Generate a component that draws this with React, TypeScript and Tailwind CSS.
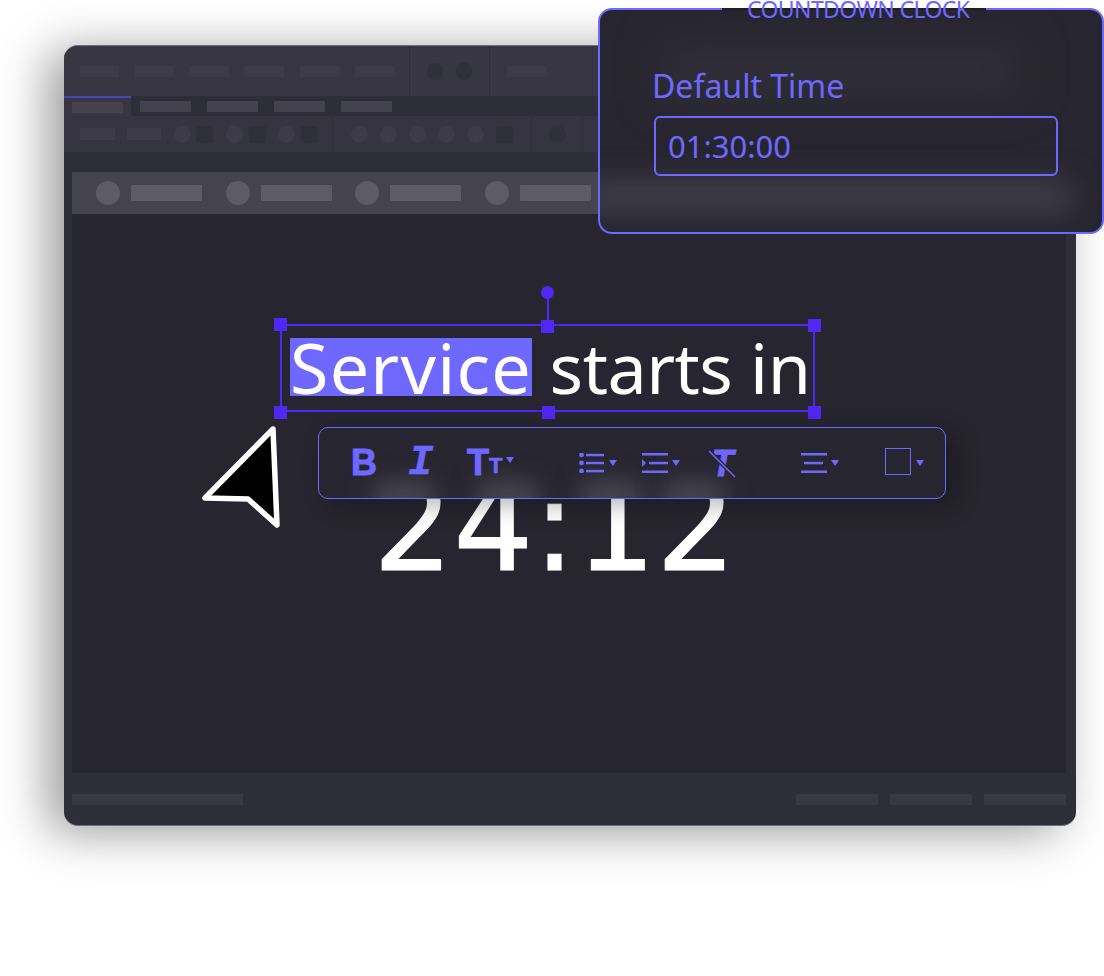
import React from 'react';

const Bar = ({ className }: { className: string }) => <div className={`shrink-0 ${className}`}></div>;

const Caret = ({ className = '' }: { className?: string }) => (
  <svg width="8" height="6" viewBox="0 0 8 6" className={`shrink-0 ${className}`}>
    <polygon points="0,0 8,0 4,6" fill="#6e68ff" />
  </svg>
);

const topBar = 'w-[39px] h-[11px] bg-[#3c3b47]';
const tabBar = 'w-[51px] h-[11px] bg-[#43424e] rounded-[1px]';
const softDot = 'w-[17px] h-[17px] rounded-full bg-[#3c3b47]';
const darkSquare = 'w-[17px] h-[17px] rounded-[2px] bg-[#30303a]';
const stripDot = 'w-[24px] h-[24px] rounded-full bg-[#5c5b66]';
const stripBar = 'w-[71px] h-[16px] rounded-[1px] bg-[#5c5b66]';
const footBar = 'h-[11px] bg-[#393844]';
const glow = 'absolute bottom-[-12px] w-[66px] h-[28px] rounded-full bg-[#4a4954] blur-[12px]';

const StripItem = () => (
  <div className="flex items-center gap-[11px] w-[129.6px] shrink-0">
    <Bar className={stripDot} />
    <Bar className={stripBar} />
  </div>
);

const Toolbar = () => (
  <div className="absolute left-[246px] top-[213px] w-[628px] h-[72px] flex items-center rounded-[10px] border border-[#6e68ff] bg-[#272630] shadow-[10px_6px_24px_rgba(0,0,0,0.3)] text-[#6e68ff]">
    {/* smeared tops of the clock digits behind the frosted bar */}
    <div className="absolute inset-0 overflow-hidden rounded-[9px]">
      <div className={`${glow} left-[52px]`}></div>
      <div className={`${glow} left-[156px]`}></div>
      <div className={`${glow} left-[259px]`}></div>
      <div className={`${glow} left-[342px]`}></div>
    </div>
    <span className="relative ml-[32px] w-[25px] font-['Liberation_Sans'] font-bold text-[36px] leading-none [-webkit-text-stroke:1px_#6e68ff]">B</span>
    <span className="relative ml-[32px] w-[26px] font-['Liberation_Mono'] font-bold italic text-[42px] leading-none [-webkit-text-stroke:0.5px_#6e68ff]">I</span>
    <span className="relative ml-[33px] font-['Liberation_Sans'] font-bold text-[36px] leading-none [-webkit-text-stroke:1px_#6e68ff]">T</span>
    <span className="relative mt-[6px] font-['Liberation_Sans'] font-bold text-[22px] leading-none [-webkit-text-stroke:0.6px_#6e68ff]">T</span>
    <Caret className="relative ml-[4px] mb-[6px]" />
    <svg width="26" height="20" viewBox="0 0 26 20" className="relative ml-[65px]">
      <g fill="#6e68ff">
        <circle cx="2.5" cy="2" r="2.4" /><circle cx="2.5" cy="10" r="2.4" /><circle cx="2.5" cy="18" r="2.4" />
        <rect x="7" y="0.8" width="18" height="2.5" /><rect x="7" y="8.8" width="18" height="2.5" /><rect x="7" y="16.8" width="18" height="2.5" />
      </g>
    </svg>
    <Caret className="relative ml-[4px]" />
    <svg width="26" height="20" viewBox="0 0 26 20" className="relative ml-[25px]">
      <g fill="#6e68ff">
        <rect x="0" y="0" width="26" height="2.5" /><rect x="7" y="8.8" width="19" height="2.5" /><rect x="0" y="17.5" width="26" height="2.5" />
        <polygon points="0,6 4,10 0,14" />
      </g>
    </svg>
    <Caret className="relative ml-[4px]" />
    <div className="relative ml-[28px] w-[28px] h-[27px] flex justify-center">
      <span className="font-['Liberation_Sans'] font-bold italic text-[36px] leading-[27px] [-webkit-text-stroke:1px_#6e68ff]">T</span>
      <svg width="28" height="27" viewBox="0 0 28 27" className="absolute left-0 top-0">
        <line x1="1" y1="1" x2="27" y2="27" stroke="#272630" strokeWidth="4" />
        <line x1="1" y1="1" x2="27" y2="27" stroke="#6e68ff" strokeWidth="1.5" />
      </svg>
    </div>
    <svg width="26" height="20" viewBox="0 0 26 20" className="relative ml-[65px]">
      <g fill="#6e68ff">
        <rect x="0" y="0" width="26" height="2.5" /><rect x="3" y="8.8" width="19" height="2.5" /><rect x="0" y="17.5" width="26" height="2.5" />
      </g>
    </svg>
    <Caret className="relative ml-[4px]" />
    <div className="relative ml-[46px] mb-[3px] w-[26px] h-[27px] border-[1.5px] border-[#6e68ff]"></div>
    <Caret className="relative ml-[5px]" />
  </div>
);

const Handle = ({ className }: { className: string }) => (
  <div className={`absolute w-[13px] h-[13px] bg-[#5028f5] ${className}`}></div>
);

export default function App() {
  return (
    <div className="relative w-full h-[976px] bg-white overflow-hidden pt-[45px] pl-[64px] font-['Noto_Sans',sans-serif]">
      <div className="w-[1012px] h-[781px] rounded-[14px] bg-[#2e2e38] border-y border-[#71707a] overflow-hidden flex flex-col shadow-[-16px_6px_48px_rgba(0,0,0,0.4)]">
        <div className="h-[50px] flex bg-[#373642] shrink-0">
          <div className="w-[346px] flex items-center gap-[16px] pl-[16px] border-r border-[#302f3a]">
            {[0, 1, 2, 3, 4, 5].map((i) => <Bar key={i} className={topBar} />)}
          </div>
          <div className="w-[80px] flex items-center gap-[13px] pl-[17px] border-r border-[#302f3a]">
            <Bar className="w-[16px] h-[17px] rounded-full bg-[#30303a]" />
            <Bar className="w-[16px] h-[17px] rounded-full bg-[#30303a]" />
          </div>
          <div className="w-[103px] flex items-center pl-[17px] border-r border-[#302f3a]">
            <Bar className={topBar} />
          </div>
        </div>

        <div className="h-[20px] flex items-center shrink-0 relative">
          <div className="w-[67px] h-full pl-[8px] flex items-center bg-[#373642] border-t-2 border-[#4d43b8]">
            <Bar className={tabBar} />
          </div>
          <div className="flex gap-[16px] ml-[9px]">
            {[0, 1, 2, 3].map((i) => <Bar key={i} className={tabBar} />)}
          </div>
        </div>

        <div className="h-[36px] flex bg-[#353440] shrink-0">
          <div className="w-[269px] flex items-center pl-[16px] border-r border-[#302f3a]">
            <Bar className="w-[35px] h-[12px] bg-[#3c3b47]" />
            <Bar className="ml-[12px] w-[34px] h-[12px] bg-[#3c3b47]" />
            <Bar className={`ml-[13px] ${softDot}`} />
            <Bar className={`ml-[5px] ${darkSquare}`} />
            <Bar className={`ml-[13px] ${softDot}`} />
            <Bar className={`ml-[6px] ${darkSquare}`} />
            <Bar className={`ml-[12px] ${softDot}`} />
            <Bar className={`ml-[6px] ${darkSquare}`} />
          </div>
          <div className="w-[199px] flex items-center gap-[12px] pl-[18px] border-r border-[#302f3a]">
            {[0, 1, 2, 3, 4].map((i) => <Bar key={i} className={softDot} />)}
            <Bar className={darkSquare} />
          </div>
          <div className="w-[51px] flex items-center pl-[17px] border-r border-[#302f3a]">
            <Bar className="w-[17px] h-[17px] rounded-full bg-[#30303a]" />
          </div>
        </div>

        <div className="flex-1 flex flex-col pl-[8px] pt-[20px] pr-[10px]">
          <div className="h-[42px] flex items-center pl-[24px] bg-[#44434e] shrink-0">
            {[0, 1, 2, 3, 4, 5, 6, 7].map((i) => <StripItem key={i} />)}
          </div>
          <div className="relative flex-1 bg-[#272630]">
            <div className="absolute left-[208px] top-[110px] w-[535px] h-[88px] border-2 border-[#5028f5]"></div>
            <div className="absolute left-[474.5px] top-[78px] w-[2px] h-[32px] bg-[#5028f5]"></div>
            <div className="absolute left-[469px] top-[72px] w-[13px] h-[13px] rounded-full bg-[#5028f5]"></div>
            <Handle className="left-[202px] top-[104px]" />
            <Handle className="left-[469px] top-[106px]" />
            <Handle className="left-[736px] top-[105px]" />
            <Handle className="left-[202px] top-[192px]" />
            <Handle className="left-[470px] top-[192px]" />
            <Handle className="left-[736px] top-[192px]" />

            <div className="absolute left-[218px] top-[109px] h-[88px] flex items-center text-white text-[70px] leading-none whitespace-nowrap">
              <span className="bg-[#6e68ff] h-[58px] leading-[58px] tracking-[1.2px]">Service</span>
              <span className="tracking-[-0.5px]">&nbsp;starts in</span>
            </div>
            <div className="absolute left-[301px] top-[248px] text-white font-['DejaVu_Sans'] text-[126px] leading-[130px] whitespace-nowrap [-webkit-text-stroke:1px_#ffffff]">24:12</div>

            <Toolbar />

            <svg width="84" height="108" viewBox="0 0 84 108" className="absolute left-[127px] top-[209px]">
              <polygon points="74,6 6,75 49,76 78,102" fill="#000" stroke="#fff" strokeWidth="5.5" strokeLinejoin="round" />
            </svg>
          </div>
          <div className="h-[52px] flex items-center shrink-0">
            <Bar className={`w-[171px] ${footBar}`} />
            <div className="ml-auto flex gap-[12px]">
              <Bar className={`w-[82px] ${footBar}`} />
              <Bar className={`w-[82px] ${footBar}`} />
              <Bar className={`w-[82px] ${footBar}`} />
            </div>
          </div>
        </div>
      </div>

      <div className="absolute left-[598px] top-[8px] w-[506px] h-[226px] rounded-[14px] border-2 border-[#6e68ff] bg-[#272630] text-[#6e68ff]">
        <div className="absolute inset-0 overflow-hidden rounded-[12px]">
          <div className="absolute left-[-20px] right-[30px] top-[170px] h-[34px] bg-[#3e3d48] blur-[14px]"></div>
          <div className="absolute left-[60px] right-[80px] top-[30px] h-[60px] bg-[#2f2e38] blur-[20px]"></div>
        </div>
        <div className="absolute left-[122px] top-[-2px] w-[264px] h-[2px] bg-[#1f1e26]"></div>
        <div className="absolute left-[122px] top-0 w-[264px] h-[10px] bg-[#272630]"></div>
        <span className="absolute left-[147px] top-[-17px] text-[23px] leading-[32px] tracking-[-0.6px] whitespace-nowrap">COUNTDOWN CLOCK</span>
        <div className="relative pl-[52px] pt-[54px] text-[32px] leading-[44px]">Default Time</div>
        <div className="relative ml-[54px] mt-[8px] w-[404px] h-[60px] rounded-[6px] border-2 border-[#6e68ff] flex items-center pl-[12px] text-[31px]">01:30:00</div>
      </div>
    </div>
  );
}
